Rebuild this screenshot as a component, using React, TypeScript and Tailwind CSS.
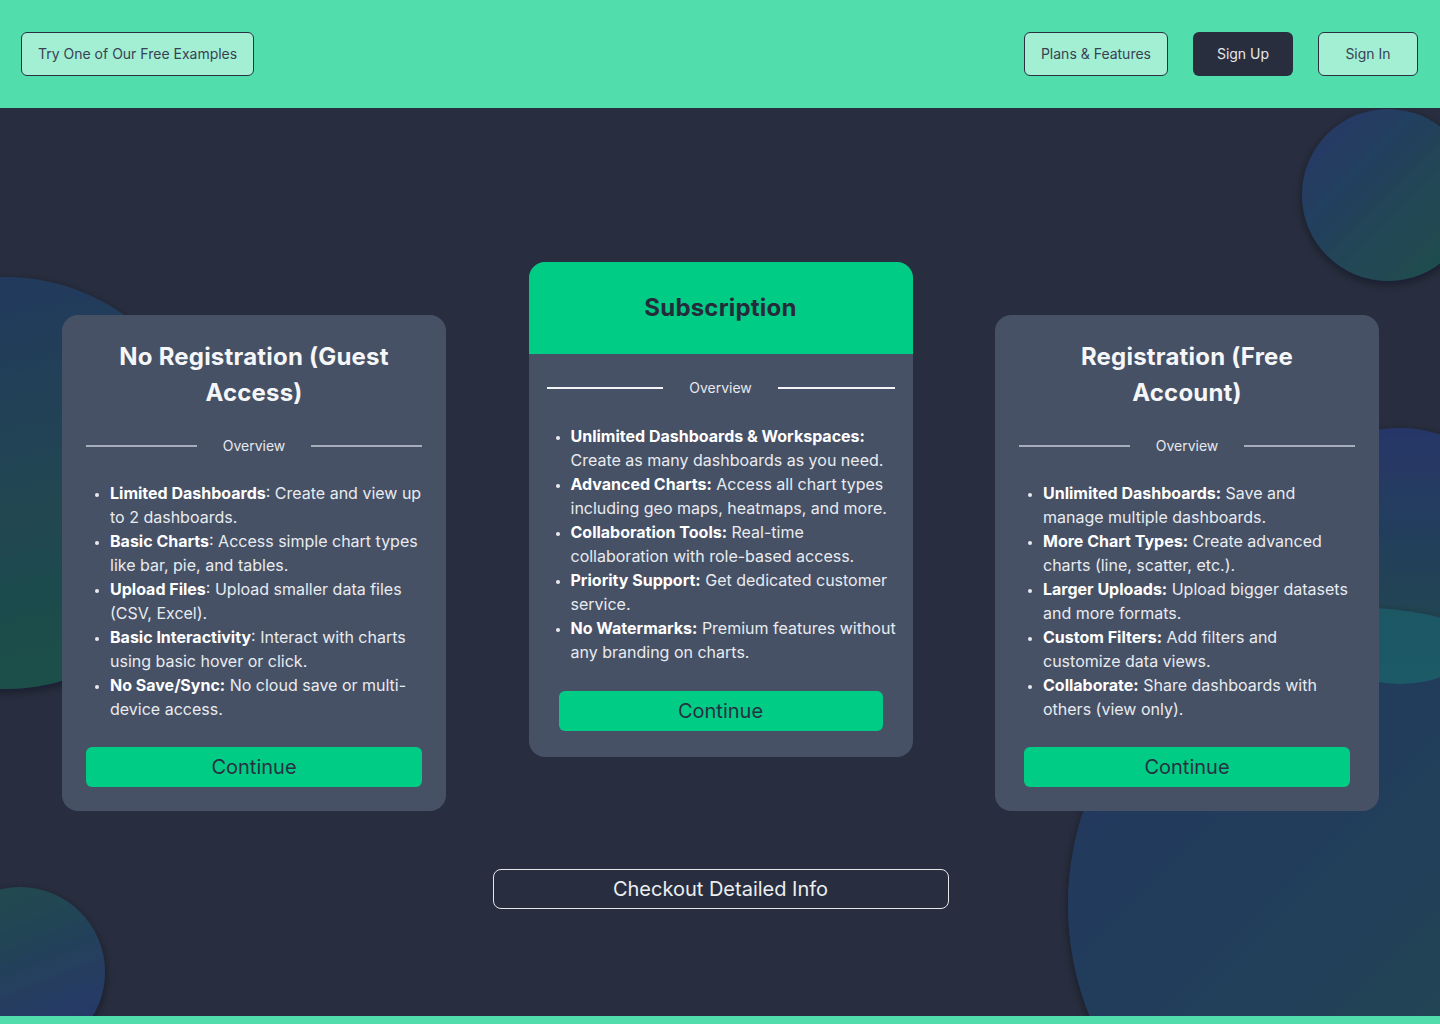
import React from 'react';

interface Feature {
  label: string;
  text: string;
  colonBold?: boolean;
}

interface Plan {
  title: string;
  features: Feature[];
}

const guest: Plan = {
  title: 'No Registration (Guest Access)',
  features: [
    { label: 'Limited Dashboards', text: 'Create and view up to 2 dashboards.' },
    { label: 'Basic Charts', text: 'Access simple chart types like bar, pie, and tables.' },
    { label: 'Upload Files', text: 'Upload smaller data files (CSV, Excel).' },
    { label: 'Basic Interactivity', text: 'Interact with charts using basic hover or click.' },
    { label: 'No Save/Sync', text: 'No cloud save or multi-device access.', colonBold: true },
  ],
};

const subscription: Plan = {
  title: 'Subscription',
  features: [
    { label: 'Unlimited Dashboards & Workspaces', text: 'Create as many dashboards as you need.', colonBold: true },
    { label: 'Advanced Charts', text: 'Access all chart types including geo maps, heatmaps, and more.', colonBold: true },
    { label: 'Collaboration Tools', text: 'Real-time collaboration with role-based access.', colonBold: true },
    { label: 'Priority Support', text: 'Get dedicated customer service.', colonBold: true },
    { label: 'No Watermarks', text: 'Premium features without any branding on charts.', colonBold: true },
  ],
};

const registered: Plan = {
  title: 'Registration (Free Account)',
  features: [
    { label: 'Unlimited Dashboards', text: 'Save and manage multiple dashboards.', colonBold: true },
    { label: 'More Chart Types', text: 'Create advanced charts (line, scatter, etc.).', colonBold: true },
    { label: 'Larger Uploads', text: 'Upload bigger datasets and more formats.', colonBold: true },
    { label: 'Custom Filters', text: 'Add filters and customize data views.', colonBold: true },
    { label: 'Collaborate', text: 'Share dashboards with others (view only).', colonBold: true },
  ],
};

function FeatureList({ features }: { features: Feature[] }) {
  return (
    <ul className="list-disc pl-6 text-base leading-6 text-[#e9ebef] marker:text-[13px]">
      {features.map((f) => (
        <li key={f.label}>
          {f.colonBold ? (
            <span className="font-bold text-white">{f.label}:</span>
          ) : (
            <>
              <span className="font-bold text-white">{f.label}</span>:
            </>
          )}{' '}
          {f.text}
        </li>
      ))}
    </ul>
  );
}

function Divider({ light }: { light?: boolean }) {
  return (
    <div className="flex items-center h-5">
      <div className={`flex-1 h-[1.5px] ${light ? 'bg-[#f3f4f6]' : 'bg-[#a7aebb]'}`} />
      <span className="px-[26px] text-sm leading-5 text-[#e6e8ec]">Overview</span>
      <div className={`flex-1 h-[1.5px] ${light ? 'bg-[#f3f4f6]' : 'bg-[#a7aebb]'}`} />
    </div>
  );
}

function ContinueButton({ inset }: { inset: string }) {
  return (
    <button className={`h-10 rounded-md bg-[#00cc86] text-xl text-[#273041] ${inset}`}>
      Continue
    </button>
  );
}

function SideCard({ plan, buttonInset }: { plan: Plan; buttonInset: string }) {
  return (
    <div className="mt-[53px] w-[384px] rounded-2xl bg-[#465166] p-6 flex flex-col">
      <h2 className="px-5 text-center text-2xl leading-9 font-bold text-[#f5f6f8] tracking-[0.2px]">
        {plan.title}
      </h2>
      <div className="mt-[25px]">
        <Divider />
      </div>
      <div className="mt-[25px]">
        <FeatureList features={plan.features} />
      </div>
      <ContinueButton inset={`mt-[26px] ${buttonInset}`} />
    </div>
  );
}

function MiddleCard({ plan }: { plan: Plan }) {
  return (
    <div className="w-[384px] rounded-2xl bg-[#465166] overflow-hidden flex flex-col">
      <div className="h-[92px] bg-[#00cc86] flex items-center justify-center">
        <h2 className="text-2xl font-bold text-[#242b3a] tracking-[0.2px]">{plan.title}</h2>
      </div>
      <div className="px-[18px] pt-[24px] pb-[26px] flex flex-col">
        <Divider light />
        <div className="mt-[26px] -mr-1">
          <FeatureList features={plan.features} />
        </div>
        <ContinueButton inset="mt-[27px] mx-3" />
      </div>
    </div>
  );
}

function Backdrop() {
  return (
    <svg className="absolute inset-0 w-full h-full" viewBox="0 0 1440 908" preserveAspectRatio="none">
      <defs>
        <filter id="sh" x="-20%" y="-20%" width="140%" height="140%">
          <feDropShadow dx="0" dy="3" stdDeviation="5" floodColor="#0b0f18" floodOpacity="0.45" />
        </filter>
        <linearGradient id="gTR" x1="0" y1="0" x2="1" y2="1">
          <stop offset="0" stopColor="#27366a" />
          <stop offset="1" stopColor="#1e5148" />
        </linearGradient>
        <linearGradient id="gL" x1="0" y1="0" x2="0.2" y2="1">
          <stop offset="0" stopColor="#24375f" />
          <stop offset="1" stopColor="#1e4f4a" />
        </linearGradient>
        <linearGradient id="gBL" x1="0" y1="0" x2="0.4" y2="1">
          <stop offset="0" stopColor="#1f4d49" />
          <stop offset="1" stopColor="#283869" />
        </linearGradient>
        <linearGradient id="gBig" x1="0" y1="0" x2="1" y2="1">
          <stop offset="0" stopColor="#25355f" />
          <stop offset="0.5" stopColor="#23405a" />
          <stop offset="1" stopColor="#1f4d47" />
        </linearGradient>
        <linearGradient id="gMid" x1="0" y1="0" x2="0" y2="1">
          <stop offset="0" stopColor="#263668" />
          <stop offset="1" stopColor="#214a4b" />
        </linearGradient>
        <linearGradient id="gOver" x1="0" y1="0" x2="0" y2="1">
          <stop offset="0" stopColor="#1f5060" />
          <stop offset="1" stopColor="#1b5a66" />
        </linearGradient>
        <clipPath id="clipBig">
          <circle cx="1365" cy="797" r="297" />
        </clipPath>
      </defs>
      <circle cx="1388" cy="87" r="86" fill="url(#gTR)" filter="url(#sh)" />
      <circle cx="5" cy="375" r="206" fill="url(#gL)" filter="url(#sh)" />
      <circle cx="20" cy="864" r="85" fill="url(#gBL)" filter="url(#sh)" />
      <circle cx="1400" cy="448" r="128" fill="url(#gMid)" filter="url(#sh)" />
      <circle cx="1365" cy="797" r="297" fill="url(#gBig)" filter="url(#sh)" />
      <circle cx="1400" cy="448" r="128" fill="url(#gOver)" clipPath="url(#clipBig)" />
    </svg>
  );
}

export default function App() {
  return (
    <div className="min-h-screen bg-[#282e3f] font-['Inter',sans-serif] flex flex-col">
      <header className="h-[108px] bg-[#52deac] flex items-center justify-between pl-[21px] pr-[22px]">
        <button className="h-11 px-4 rounded-md border border-[#2a3040] bg-[#a2efd3] text-sm text-[#394254]">
          Try One of Our Free Examples
        </button>
        <div className="flex items-center gap-[25px]">
          <button className="h-11 px-4 rounded-md border border-[#2a3040] bg-[#a2efd3] text-sm text-[#394254]">
            Plans &amp; Features
          </button>
          <button className="h-11 w-[100px] rounded-md bg-[#282e3e] text-sm text-[#e6e8ec]">
            Sign Up
          </button>
          <button className="h-11 w-[100px] rounded-md border border-[#2a3040] bg-[#a2efd3] text-sm text-[#394254]">
            Sign In
          </button>
        </div>
      </header>

      <main className="relative h-[908px] overflow-hidden">
        <Backdrop />
        <div className="relative pt-[154px] pl-[62px] pr-[61px] flex flex-col items-center">
          <div className="w-full flex items-start justify-between">
            <SideCard plan={guest} buttonInset="" />
            <MiddleCard plan={subscription} />
            <SideCard plan={registered} buttonInset="mx-[5px]" />
          </div>
          <button className="mt-[58px] h-10 w-[456px] rounded-lg border border-[#e5e7eb] text-xl text-[#eceef1]">
            Checkout Detailed Info
          </button>
        </div>
      </main>

      <footer className="h-2 bg-[#52deac]" />
    </div>
  );
}
